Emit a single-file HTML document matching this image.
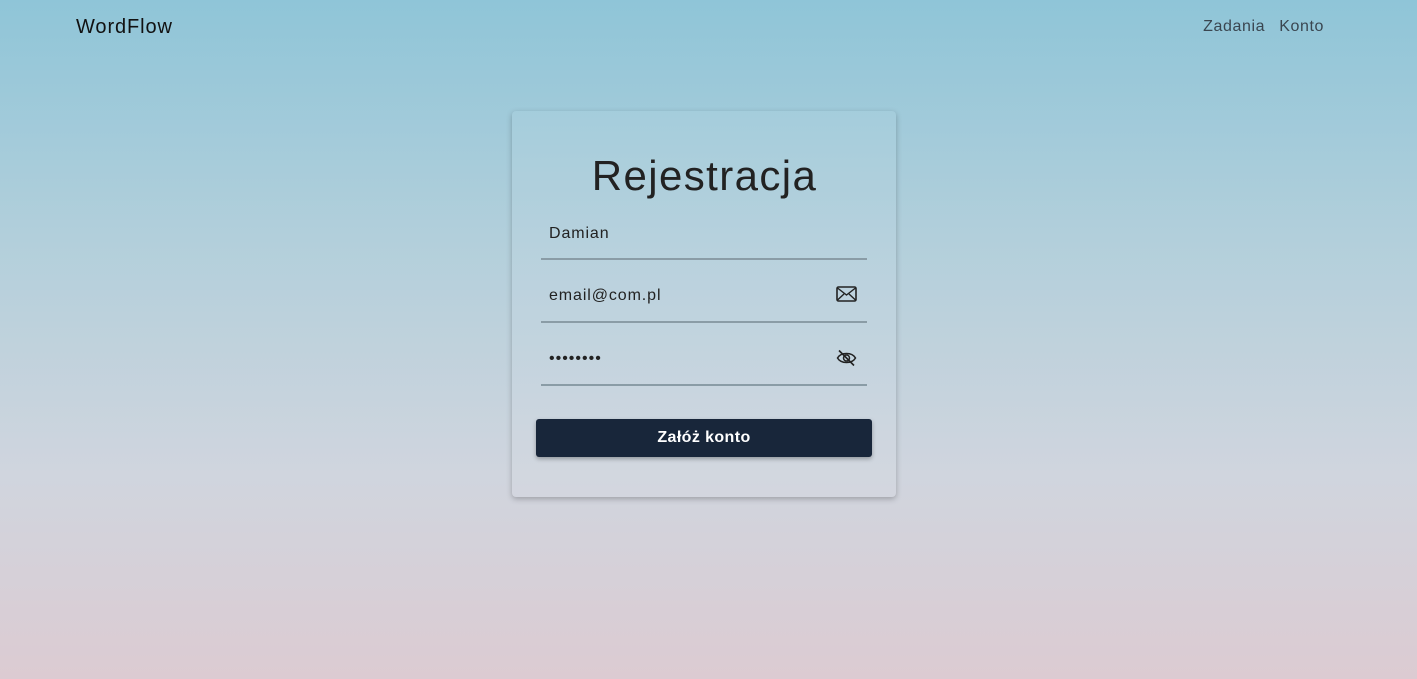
<!DOCTYPE html>
<html><head><meta charset="utf-8"><style>
html,body{margin:0;padding:0;width:1417px;height:679px;overflow:hidden}
body{font-family:"Liberation Sans",sans-serif;background:linear-gradient(180deg,#8fc5d8 0%,#b2cfdb 35%,#d0d5de 70%,#dccbd2 100%);position:relative}
.logo{position:absolute;left:76px;top:16px;font-size:20px;color:#111;letter-spacing:0.9px}
.nav{position:absolute;right:93px;top:18px;font-size:16px;color:#3a4650;letter-spacing:0.6px}
.nav span{margin-left:14px}
.card{position:absolute;left:512px;top:111px;width:384px;height:386px;border-radius:4px;background:rgba(255,255,255,0.06);box-shadow:0 2px 6px rgba(0,0,0,0.25)}
h1{position:absolute;left:0;right:0;top:152px;margin:0;text-align:center;font-size:42px;font-weight:normal;color:#222;letter-spacing:1.4px;padding-right:8px}
.f{position:absolute;left:541px;width:326px;height:2px;background:#8a9ca6}
.t{position:absolute;left:549px;font-size:16px;color:#222;letter-spacing:0.9px}
.btn{position:absolute;left:536px;top:419px;width:336px;height:38px;background:#18263a;border-radius:3px;color:#fff;font-size:16px;font-weight:bold;text-align:center;line-height:38px;box-shadow:0 2px 4px rgba(0,0,0,0.3);letter-spacing:0.4px}
svg{position:absolute}
</style></head><body>
<div class="logo">WordFlow</div>
<div class="nav"><span>Zadania</span><span>Konto</span></div>
<div class="card"></div>
<h1>Rejestracja</h1>
<div class="t" style="top:225px">Damian</div>
<div class="f" style="top:258px"></div>
<div class="t" style="top:287px">email@com.pl</div>
<svg style="left:836px;top:286px" width="21" height="16" viewBox="0 0 21 16"><rect x="1" y="1" width="19" height="14" rx="1.5" fill="none" stroke="#222" stroke-width="1.6"/><path d="M1.5 2 L10.5 9 L19.5 2 M1.5 14 L8 8 M19.5 14 L13 8" fill="none" stroke="#222" stroke-width="1.4"/></svg>
<div class="f" style="top:321px"></div>
<div class="t" style="top:350px;letter-spacing:1px">••••••••</div>
<svg style="left:836px;top:349px" width="21" height="18" viewBox="0 0 21 18"><path d="M1.5 9 C5 3 16 3 19.5 9 C16 15 5 15 1.5 9 Z" fill="none" stroke="#222" stroke-width="1.5"/><circle cx="10.5" cy="9" r="3" fill="none" stroke="#222" stroke-width="1.5"/><path d="M3 1.5 L18 16.5" stroke="#222" stroke-width="1.6"/></svg>
<div class="f" style="top:384px"></div>
<div class="btn">Załóż konto</div>
</body></html>
